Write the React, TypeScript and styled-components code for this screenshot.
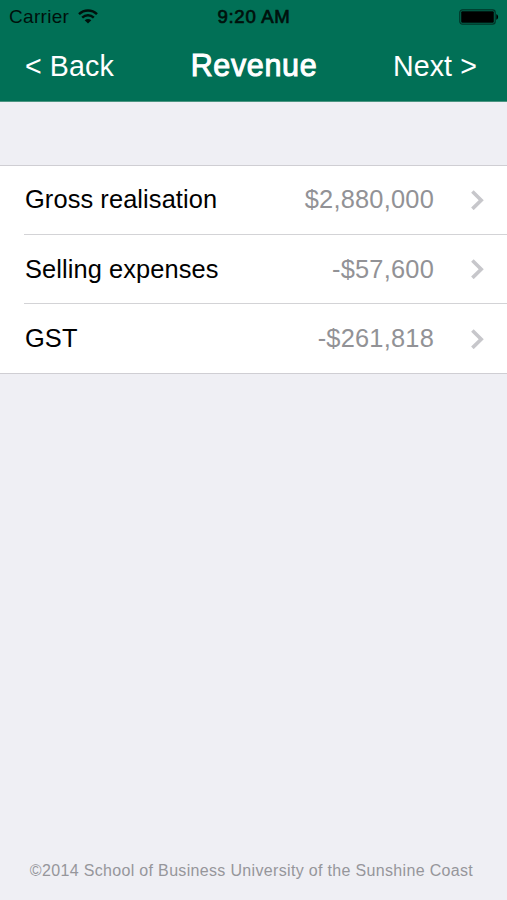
import React from "react";
import styled, { createGlobalStyle } from "styled-components";

const GlobalStyle = createGlobalStyle`
  * { box-sizing: border-box; }
  body {
    margin: 0;
    background: #efeff4;
    font-family: "Liberation Sans", Arial, sans-serif;
  }
`;

const Screen = styled.div`
  width: 507px;
  height: 900px;
  display: flex;
  flex-direction: column;
  overflow: hidden;
  background: #efeff4;
`;

const Header = styled.header`
  height: 102px;
  flex: none;
  background: #017056;
  border-bottom: 1px solid #4b9581;
`;

const StatusBar = styled.div`
  height: 32px;
  display: grid;
  grid-template-columns: 1fr auto 1fr;
  align-items: center;
  padding: 0 8px 0 9px;
  color: #00110c;
`;

const Carrier = styled.div`
  display: flex;
  align-items: center;
  gap: 9px;
  font-size: 19px;
  letter-spacing: 0.3px;
  line-height: 32px;
`;

const CarrierName = styled.span`
  padding-top: 1px;
`;

const Clock = styled.div`
  font-size: 18.6px;
  letter-spacing: 0.7px;
  line-height: 32px;
  padding-top: 1px;
  -webkit-text-stroke: 0.7px currentColor;
`;

const Battery = styled.svg`
  justify-self: end;
`;

const NavBar = styled.nav`
  height: 69px;
  display: grid;
  grid-template-columns: 1fr auto 1fr;
  align-items: center;
  padding: 0 30px 0 25px;
  color: #fff;
`;

const NavButton = styled.button<{ $end?: boolean }>`
  justify-self: ${(p) => (p.$end ? "end" : "start")};
  padding: 0 0 2px;
  border: 0;
  background: none;
  color: inherit;
  font-family: inherit;
  font-size: 28.6px;
  letter-spacing: 0.1px;
  line-height: 32px;
`;

const Title = styled.h1`
  margin: 0;
  padding: 0 0 4px 6px;
  font-size: 30.5px;
  font-weight: 400;
  letter-spacing: 0.65px;
  line-height: 34px;
  -webkit-text-stroke: 1px currentColor;
`;

const List = styled.ul`
  list-style: none;
  display: grid;
  grid-template-rows: 68px 69px 70px;
  margin: 63px 0 0;
  padding: 0 0 0 24px;
  background: #fff;
  border-top: 1px solid #cfced3;
  border-bottom: 1px solid #cfced3;
`;

const Row = styled.li`
  display: flex;
  align-items: center;
  padding: 0 23px 0 1px;
  font-size: 25.4px;
  letter-spacing: 0.1px;

  & + & {
    border-top: 1px solid #d3d3d6;
  }

  &:first-child > span {
    padding-bottom: 2px;
  }
`;

const Label = styled.span`
  flex: 1;
  color: #000;
`;

const Value = styled.span`
  color: #929296;
  letter-spacing: 0.22px;
  margin-right: 37px;
`;

const Footer = styled.footer`
  margin-top: auto;
  height: 59px;
  line-height: 59px;
  padding-right: 4px;
  text-align: center;
  font-size: 16px;
  letter-spacing: 0.33px;
  color: #96969b;
`;

const WifiIcon = () => (
  <svg width="20" height="15" viewBox="0 0 20 15" fill="none" stroke="currentColor" strokeWidth="2.4">
    <path d="M1 5.2C6 .2 14 .2 19 5.2M4.2 8.6c3.3-3.2 8.3-3.2 11.6 0" />
    <path d="M6.7 11.3c2-1.7 4.6-1.7 6.6 0L10 14.6Z" fill="currentColor" stroke="none" />
  </svg>
);

const BatteryIcon = () => (
  <Battery width="40" height="16" viewBox="0 0 40 16">
    <rect x="0.8" y="0.8" width="35.4" height="14.4" rx="2.6" fill="none" stroke="#003226" strokeWidth="1.2" />
    <rect x="2.2" y="2.2" width="32.6" height="11.6" rx="1" fill="#000" />
    <path d="M37.3 5.3c2.4.4 2.4 5 0 5.4Z" fill="#000" />
  </Battery>
);

const Chevron = () => (
  <svg width="13" height="20" viewBox="0 0 13 20" fill="none" stroke="#c7c7cb" strokeWidth="3.6">
    <path d="M1.4 1.5 10.2 10.2 1.4 18.9" />
  </svg>
);

const rows = [
  { label: "Gross realisation", value: "$2,880,000" },
  { label: "Selling expenses", value: "-$57,600" },
  { label: "GST", value: "-$261,818" },
];

export default function App() {
  return (
    <>
      <GlobalStyle />
      <Screen>
        <Header>
          <StatusBar>
            <Carrier>
              <CarrierName>Carrier</CarrierName>
              <WifiIcon />
            </Carrier>
            <Clock>9:20 AM</Clock>
            <BatteryIcon />
          </StatusBar>
          <NavBar>
            <NavButton>&lt; Back</NavButton>
            <Title>Revenue</Title>
            <NavButton $end>Next &gt;</NavButton>
          </NavBar>
        </Header>
        <List>
          {rows.map((row) => (
            <Row key={row.label}>
              <Label>{row.label}</Label>
              <Value>{row.value}</Value>
              <Chevron />
            </Row>
          ))}
        </List>
        <Footer>©2014 School of Business University of the Sunshine Coast</Footer>
      </Screen>
    </>
  );
}
